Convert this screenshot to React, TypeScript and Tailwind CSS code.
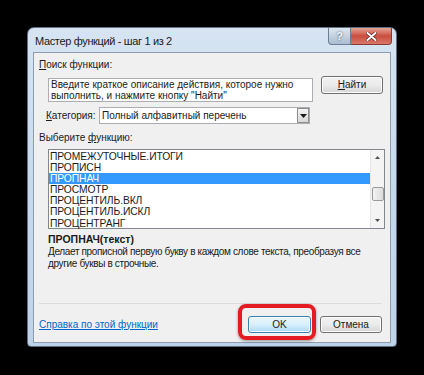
import React from "react"

const items = [
  "ПРОМЕЖУТОЧНЫЕ.ИТОГИ",
  "ПРОПИСН",
  "ПРОПНАЧ",
  "ПРОСМОТР",
  "ПРОЦЕНТИЛЬ.ВКЛ",
  "ПРОЦЕНТИЛЬ.ИСКЛ",
  "ПРОЦЕНТРАНГ",
]

const font = { fontFamily: '"Liberation Sans", Arial, sans-serif' }

export default function App() {
  return (
    <div className="w-[424px] h-[375px] bg-black pt-[27px] pl-[27px]" style={font}>
      {/* window frame */}
      <div className="w-[370px] h-[320px] rounded-t-[7px] rounded-b-[4px] border border-[#5f6f82] bg-gradient-to-b from-[#d6e4f2] via-[#c6d9ed] to-[#bed3ea] px-[5px] pb-[3px] flex flex-col">
        {/* title bar */}
        <div className="h-[24px] flex items-start justify-between">
          <div className="pt-[6px] pl-[2px] text-[11px] tracking-[-0.35px] leading-[14px] text-[#1a1a1a] whitespace-nowrap">Мастер функций - шаг 1 из 2</div>
          <div className="flex mr-[-1px]">
            <div className="w-[23px] h-[17px] rounded-bl-[4px] border border-t-0 border-[#6d7f94] bg-gradient-to-b from-[#dfe7f0] to-[#a9bcd1] flex items-center justify-center text-[11px] font-bold text-[#f4f7fa] [text-shadow:0_0_2px_#30455c]">
              ?
            </div>
            <div className="w-[41px] h-[17px] rounded-br-[4px] border border-l-0 border-t-0 border-[#8a3a32] bg-gradient-to-b from-[#e6a497] via-[#c94d3f] to-[#d9766a] flex items-center justify-center">
              <svg width="11" height="9" viewBox="0 0 11 9">
                <path d="M1.5 1 L9.5 8 M9.5 1 L1.5 8" stroke="#5a1a14" strokeWidth="3.2" strokeLinecap="round" />
                <path d="M1.5 1 L9.5 8 M9.5 1 L1.5 8" stroke="#ffffff" strokeWidth="2" strokeLinecap="round" />
              </svg>
            </div>
          </div>
        </div>

        {/* client area */}
        <div className="flex-1 bg-[#f0f0f0] border border-[#8e9db0] pl-[5px] pr-[7px] text-[10px] leading-[12px] text-[#1a1a1a] flex flex-col">
          <div className="mt-[6px] h-[12px]">
            <span className="underline">П</span>оиск функции:
          </div>

          <div className="flex items-start h-[26px] mt-[5px]">
            <div className="ml-[9px] mt-[2px] w-[265px] h-[24px] bg-white border border-[#abadb3] pl-[2px] leading-[11px] whitespace-nowrap">
              Введите краткое описание действия, которое нужно
              <br />
              выполнить, и нажмите кнопку "Найти"
            </div>
            <button className="ml-[8px] w-[62px] h-[18px] rounded-[3px] border border-[#707070] bg-gradient-to-b from-[#f2f2f2] via-[#ebebeb] to-[#d6d6d6] text-[10px] text-[#1a1a1a] shadow-[inset_0_0_0_1px_#fcfcfc]">
              <span className="underline">Н</span>айти
            </button>
          </div>

          <div className="flex items-center h-[17px] mt-[5px]">
            <div className="ml-[7px] w-[53px]">
              <span className="underline">К</span>атегория:
            </div>
            <div className="w-[211px] h-[17px] bg-white border border-[#abadb3] flex items-center justify-between">
              <span className="pl-[2px]">Полный алфавитный перечень</span>
              <div className="w-[12px] h-[15px] border border-[#8f8f8f] bg-gradient-to-b from-[#f4f4f4] to-[#d8d8d8] flex items-center justify-center">
                <svg width="7" height="4" viewBox="0 0 7 4">
                  <path d="M0 0 L7 0 L3.5 4 Z" fill="#1a1a1a" />
                </svg>
              </div>
            </div>
          </div>

          <div className="mt-[8px] h-[12px]">
            Выберите <span className="underline">ф</span>ункцию:
          </div>

          <div className="ml-[9px] mt-[5px] w-[337px] h-[80px] bg-white border border-[#828790] flex">
            <div className="flex-1 pt-[1px]">
              {items.map((it) => (
                <div
                  key={it}
                  className={
                    it === "ПРОПНАЧ"
                      ? "h-[11.1px] leading-[11px] pl-[1px] bg-[#3399ff] text-white text-[10.3px] tracking-[-0.1px]"
                      : "h-[11.1px] leading-[11px] pl-[1px] text-[10.3px] tracking-[-0.1px]"
                  }
                >
                  {it}
                </div>
              ))}
            </div>
            <div className="w-[14px] flex flex-col items-center bg-[#f4f4f4] border-l border-[#e6e6e6]">
              <svg className="mt-[6px]" width="5" height="3" viewBox="0 0 5 3">
                <path d="M0 3 L5 3 L2.5 0 Z" fill="#505050" />
              </svg>
              <div className="mt-[28px] w-[12px] h-[14px] rounded-[2px] border border-[#9a9a9a] bg-gradient-to-r from-[#f3f3f3] to-[#dcdcdc]" />
              <div className="flex-1" />
              <svg className="mb-[6px]" width="5" height="3" viewBox="0 0 5 3">
                <path d="M0 0 L5 0 L2.5 3 Z" fill="#505050" />
              </svg>
            </div>
          </div>

          <div className="ml-[9px] mt-[4px] h-[12px] font-bold text-[10.5px]">ПРОПНАЧ(текст)</div>
          <div className="ml-[9px] mt-[1px] leading-[12px] whitespace-nowrap tracking-[-0.35px]">
            Делает прописной первую букву в каждом слове текста, преобразуя все
            <br />
            другие буквы в строчные.
          </div>

          <div className="flex-1" />
          <div className="h-px bg-[#dcdcdc] mr-[1px]" />

          <div className="flex items-center h-[17px] mt-[12px] mb-[9px]">
            <a className="text-[#0066cc] underline flex-1">Справка по этой функции</a>
            <div className="relative">
              <button className="w-[63px] h-[17px] rounded-[3px] border border-[#3c7fb1] bg-gradient-to-b from-[#eaf6fd] via-[#d9f0fc] to-[#a7d9f5] text-[10px] text-[#1a1a1a] shadow-[inset_0_0_0_1px_#f5fbfe]">
                OK
              </button>
              <div className="absolute left-[-10px] top-[-12px] w-[78px] h-[36px] rounded-[8px] border-[4px] border-[#e41b23] shadow-[0_1px_3px_rgba(0,0,0,0.4)] pointer-events-none" />
            </div>
            <button className="ml-[9px] mr-[1px] w-[62px] h-[17px] rounded-[3px] border border-[#707070] bg-gradient-to-b from-[#f2f2f2] via-[#ebebeb] to-[#d6d6d6] text-[10px] text-[#1a1a1a] shadow-[inset_0_0_0_1px_#fcfcfc]">
              Отмена
            </button>
          </div>
        </div>
      </div>
    </div>
  )
}
